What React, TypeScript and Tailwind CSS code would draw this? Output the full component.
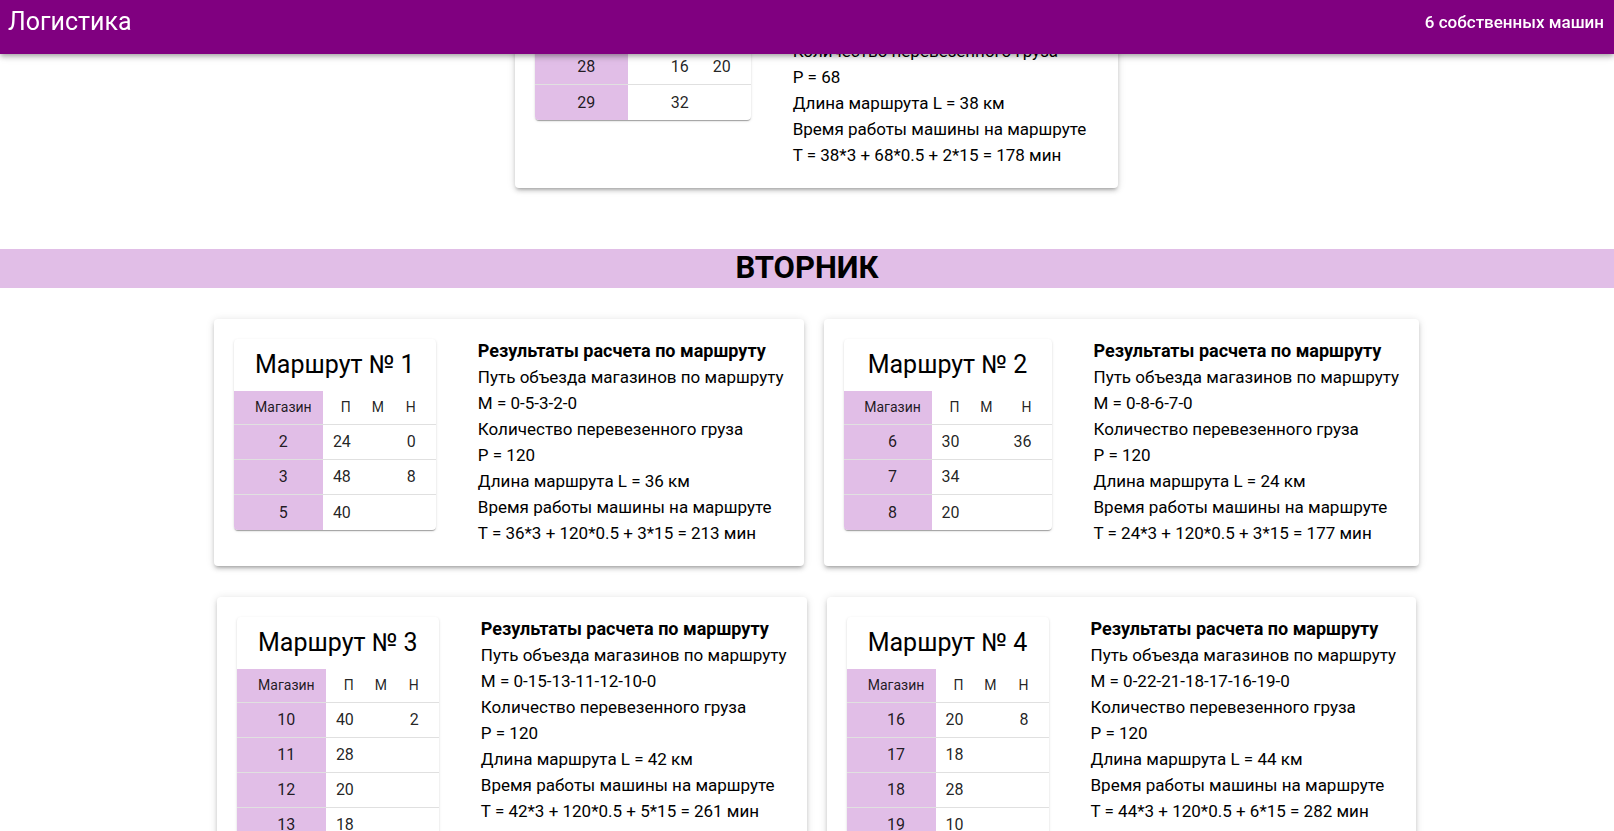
import React from 'react';

type Row = { shop: number; p?: number; m?: number; n?: number };

type Route = {
  num: number;
  cols: string;
  rows: Row[];
  path: string;
  load: number;
  length: number;
  stops: number;
  time: number;
  tableClass?: string;
};

const mondayLast: Route = {
  num: 6,
  cols: 'grid-cols-[93px_48px_33px_42px]',
  rows: [
    { shop: 28, m: 16, n: 20 },
    { shop: 29, m: 32 },
  ],
  path: '0-28-29-0',
  load: 68,
  length: 38,
  stops: 2,
  time: 178,
  tableClass: 'mt-[3px]',
};

const tuesday: Route[] = [
  {
    num: 1,
    cols: 'grid-cols-[89px_48px_33px_32px]',
    rows: [
      { shop: 2, p: 24, n: 0 },
      { shop: 3, p: 48, n: 8 },
      { shop: 5, p: 40 },
    ],
    path: '0-5-3-2-0',
    load: 120,
    length: 36,
    stops: 3,
    time: 213,
  },
  {
    num: 2,
    cols: 'grid-cols-[88px_48px_33px_39px]',
    rows: [
      { shop: 6, p: 30, n: 36 },
      { shop: 7, p: 34 },
      { shop: 8, p: 20 },
    ],
    path: '0-8-6-7-0',
    load: 120,
    length: 24,
    stops: 3,
    time: 177,
  },
  {
    num: 3,
    cols: 'grid-cols-[89px_48px_33px_32px]',
    rows: [
      { shop: 10, p: 40, n: 2 },
      { shop: 11, p: 28 },
      { shop: 12, p: 20 },
      { shop: 13, p: 18 },
      { shop: 15, p: 12 },
    ],
    path: '0-15-13-11-12-10-0',
    load: 120,
    length: 42,
    stops: 5,
    time: 261,
  },
  {
    num: 4,
    cols: 'grid-cols-[89px_48px_33px_32px]',
    rows: [
      { shop: 16, p: 20, n: 8 },
      { shop: 17, p: 18 },
      { shop: 18, p: 28 },
      { shop: 19, p: 10 },
      { shop: 21, p: 16 },
      { shop: 22, p: 20 },
    ],
    path: '0-22-21-18-17-16-19-0',
    load: 120,
    length: 44,
    stops: 6,
    time: 282,
  },
];

const RouteTable = ({ route }: { route: Route }) => {
  return (
    <div
      className={`bg-white rounded shadow-[0_2px_1px_-1px_rgba(0,0,0,0.2),0_1px_1px_0_rgba(0,0,0,0.14),0_1px_3px_0_rgba(0,0,0,0.12)] overflow-hidden text-[rgba(0,0,0,0.87)] ${route.tableClass ?? ''}`}
    >
      <div className="h-[52px] flex items-center justify-center text-[25px] text-black">
        Маршрут № {route.num}
      </div>
      <div className={`grid ${route.cols}`}>
        <div className="h-[34px] flex items-center justify-center pl-[20px] pr-[10px] bg-[#e1bee7] border-b border-[#e0e0e0] text-[14px]">
          Магазин
        </div>
        <div className="h-[34px] flex items-center justify-end pr-[20px] border-b border-[#e0e0e0] text-[14px]">П</div>
        <div className="h-[34px] flex items-center justify-end pr-[20px] border-b border-[#e0e0e0] text-[14px]">М</div>
        <div className="h-[34px] flex items-center justify-end pr-[20px] border-b border-[#e0e0e0] text-[14px]">Н</div>
        {route.rows.map((row, i) => {
          const last = i === route.rows.length - 1;
          const line = last ? '' : 'border-b border-[#e0e0e0]';
          return (
            <React.Fragment key={row.shop}>
              <div className={`h-[35px] flex items-center justify-center pl-[20px] pr-[10px] bg-[#e1bee7] text-[16px] ${line}`}>
                {row.shop}
              </div>
              <div className={`h-[35px] flex items-center justify-end pr-[20px] text-[16px] ${line}`}>{row.p ?? ''}</div>
              <div className={`h-[35px] flex items-center justify-end pr-[20px] text-[16px] ${line}`}>{row.m ?? ''}</div>
              <div className={`h-[35px] flex items-center justify-end pr-[20px] text-[16px] ${line}`}>{row.n ?? ''}</div>
            </React.Fragment>
          );
        })}
      </div>
    </div>
  );
};

const RouteCard = ({ route }: { route: Route }) => {
  return (
    <div className="bg-white rounded p-5 flex items-start gap-[42px] shadow-[0_3px_3px_-2px_rgba(0,0,0,0.2),0_3px_4px_0_rgba(0,0,0,0.14),0_1px_8px_0_rgba(0,0,0,0.12)]">
      <RouteTable route={route} />
      <div className="-mt-[1px] text-[17px] leading-[26px] text-black whitespace-nowrap">
        <div className="text-[18px] font-bold">Результаты расчета по маршруту</div>
        <div>Путь объезда магазинов по маршруту</div>
        <div>M = {route.path}</div>
        <div>Количество перевезенного груза</div>
        <div>P = {route.load}</div>
        <div>Длина маршрута L = {route.length} км</div>
        <div>Время работы машины на маршруте</div>
        <div>
          T = {route.length}*3 + {route.load}*0.5 + {route.stops}*15 = {route.time} мин
        </div>
      </div>
    </div>
  );
};

export default function App() {
  return (
    <div className="min-h-screen bg-white font-['Roboto','Helvetica','Arial',sans-serif]">
      <header className="fixed top-0 inset-x-0 z-10 h-[54px] bg-[#800080] text-white flex justify-between pl-2 pr-[10px] shadow-[0_2px_4px_-1px_rgba(0,0,0,0.2),0_4px_5px_0_rgba(0,0,0,0.14),0_1px_10px_0_rgba(0,0,0,0.12)]">
        <span className="text-[25px] leading-[44px]">Логистика</span>
        <span className="text-[17px] font-medium leading-[44px]">6 собственных машин</span>
      </header>

      <main className="-mt-[59px] pb-10">
        <div className="flex justify-center pl-[19px]">
          <RouteCard route={mondayLast} />
        </div>

        <h2 className="mt-[61px] h-[39px] bg-[#e1bee7] flex items-center justify-center text-[31px] font-bold text-black">
          ВТОРНИК
        </h2>

        <div className="mt-[31px] flex flex-wrap justify-center gap-x-5 gap-y-[31px] pl-[19px]">
          {tuesday.map((route) => (
            <RouteCard key={route.num} route={route} />
          ))}
        </div>
      </main>
    </div>
  );
}
